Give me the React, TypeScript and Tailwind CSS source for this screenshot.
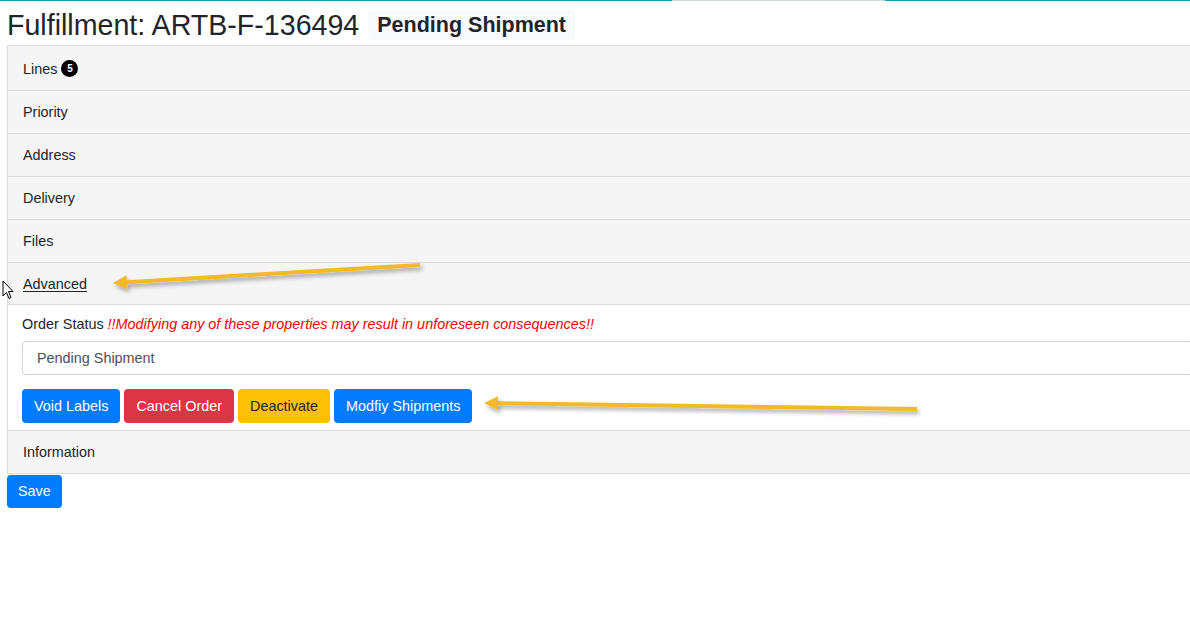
import React from 'react';

// --- Accordion header row ---
const Header = ({ label }: { label: string }) => (
  <div className="h-[43px] flex items-center px-[15px] pt-[2px] bg-[#f5f5f5] border-b border-[#dcdcdc] text-[14.4px] text-[#212529]">
    <span>{label}</span>
  </div>
);

const Arrow = ({ x1, y1, x2, y2 }: { x1: number; y1: number; x2: number; y2: number }) => {
  const ang = Math.atan2(y2 - y1, x2 - x1);
  const len = 14;
  const w = 7;
  const bx = x2 - Math.cos(ang) * len;
  const by = y2 - Math.sin(ang) * len;
  const px = -Math.sin(ang) * w;
  const py = Math.cos(ang) * w;
  return (
    <g filter="url(#shadow)">
      <line x1={x1} y1={y1} x2={bx} y2={by} stroke="#f2b92b" strokeWidth={4} />
      <polygon points={`${x2},${y2} ${bx + px},${by + py} ${bx - px},${by - py}`} fill="#f2b92b" />
    </g>
  );
};

export default function App() {
  return (
    <div className="relative h-[624px] w-[1190px] overflow-hidden bg-white font-['Liberation_Sans',Arial,sans-serif] text-[#212529]">
      {/* top progress line */}
      <div className="flex h-px w-full">
        <div className="w-[672px] bg-[#17a2b8]" />
        <div className="w-[213px] bg-[#cfd8dc]" />
        <div className="flex-1 bg-[#17a2b8]" />
      </div>

      {/* title */}
      <div className="flex items-center pl-[7px] pt-[4px] h-[44px]">
        <h1 className="text-[28.6px] leading-none">Fulfillment: ARTB-F-136494</h1>
        <span className="ml-[9px] px-[9px] h-[30px] flex items-center rounded-[4px] bg-[#f8f9fa] text-[21.5px] font-bold">Pending Shipment</span>
      </div>

      {/* accordion */}
      <div className="ml-[7px] w-[1200px] border-l border-t border-[#dcdcdc]">
        <div className="h-[45px] flex items-center px-[15px] pt-[3px] bg-[#f5f5f5] border-b border-[#dcdcdc] text-[14.4px]">
          <span>Lines</span>
          <span className="ml-[4px] mb-[2px] w-[17px] h-[17px] rounded-full bg-black text-white text-[10px] font-bold flex items-center justify-center">5</span>
        </div>
        <Header label="Priority" />
        <Header label="Address" />
        <Header label="Delivery" />
        <Header label="Files" />
        <div className="h-[42px] flex items-center px-[15px] pt-[2px] bg-[#f5f5f5] border-b border-[#dcdcdc] text-[14.4px]">
          <span className="underline underline-offset-2">Advanced</span>
        </div>

        {/* body */}
        <div className="bg-white px-[14px] pt-[11px] pb-[7px] border-b border-[#dcdcdc]">
          <div className="text-[14.4px] leading-[16px]">
            Order Status <span className="italic text-[#ff0000]">!!Modifying any of these properties may result in unforeseen consequences!!</span>
          </div>
          <div className="mt-[9px] h-[34px] border border-[#ced4da] rounded-[4px] flex items-center pl-[14px] pt-px text-[14.4px] text-[#495057]">
            Pending Shipment
          </div>
          <div className="mt-[14px] flex gap-[4px]">
            <button className="h-[34px] px-[12px] pt-px rounded-[4px] bg-[#007bff] text-white text-[14.4px]">Void Labels</button>
            <button className="h-[34px] px-[12px] pt-px rounded-[4px] bg-[#dc3545] text-white text-[14.4px]">Cancel Order</button>
            <button className="h-[34px] px-[12px] pt-px rounded-[4px] bg-[#ffc107] text-[#212529] text-[14.4px]">Deactivate</button>
            <button className="h-[34px] px-[12px] pt-px rounded-[4px] bg-[#007bff] text-white text-[14.4px]">Modfiy Shipments</button>
          </div>
        </div>
        <Header label="Information" />
      </div>

      <button className="ml-[7px] mt-[1px] h-[33px] px-[11px] rounded-[4px] bg-[#007bff] text-white text-[14.4px]">Save</button>

      {/* annotation overlay */}
      <svg className="absolute inset-0 pointer-events-none" width="1190" height="624">
        <defs>
          <filter id="shadow" x="-10%" y="-200%" width="120%" height="500%">
            <feDropShadow dx="2" dy="3" stdDeviation="2" floodColor="#000" floodOpacity="0.35" />
          </filter>
        </defs>
        <Arrow x1={420} y1={265} x2={113} y2={283} />
        <Arrow x1={917} y1={409} x2={484} y2={403} />
        {/* mouse cursor */}
        <path d="M3 281 L3 296 L6.5 292.5 L9 298.5 L11 297.5 L8.5 291.5 L13 291.5 Z" fill="#fff" stroke="#000" strokeWidth={1} />
      </svg>
    </div>
  );
}
